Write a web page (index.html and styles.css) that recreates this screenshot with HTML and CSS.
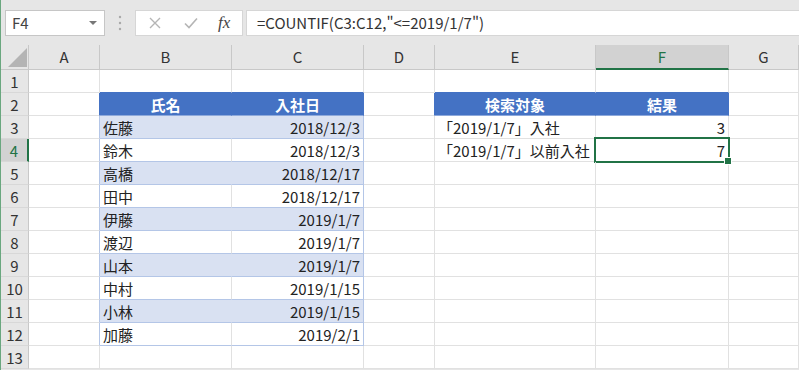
FILE: index.html
```html
<!DOCTYPE html>
<html lang="ja">
<head>
    <meta charset="UTF-8">
    <title>COUNTIF</title>
    <link rel="stylesheet" href="styles.css">
</head>
<body>
    <div class="bar">
        <div class="namebox">F4<span class="drop"></span></div>
        <svg class="grip" width="4" height="16" viewBox="0 0 4 16"><circle cx="2" cy="2" r="1.2"/><circle cx="2" cy="8" r="1.2"/><circle cx="2" cy="14" r="1.2"/></svg>
        <div class="btns">
            <svg width="14" height="14" viewBox="0 0 14 14"><path d="M2 2 L12 12 M12 2 L2 12" stroke="#b5b5b5" stroke-width="1.4" fill="none"/></svg>
            <svg width="16" height="14" viewBox="0 0 16 14"><path d="M2 7.5 L6 11.5 L14 2.5" stroke="#b5b5b5" stroke-width="1.6" fill="none"/></svg>
            <span class="fx">fx</span>
        </div>
        <div class="formula">=COUNTIF(C3:C12,"&lt;=2019/1/7")</div>
    </div>

    <div class="sheet">
        <div class="corner"><span class="tri"></span></div>
        <div class="ch">A</div><div class="ch">B</div><div class="ch">C</div><div class="ch">D</div><div class="ch">E</div><div class="ch sel">F</div><div class="ch">G</div>

        <div class="rh">1</div>
        <div class="c"></div><div class="c tt"></div><div class="c tt"></div><div class="c"></div><div class="c tt"></div><div class="c tt"></div><div class="c"></div>

        <div class="rh">2</div>
        <div class="c hl"></div><div class="c hd">氏名</div><div class="c hd">入社日</div><div class="c hl"></div><div class="c hd">検索対象</div><div class="c hd">結果</div><div class="c"></div>

        <div class="rh">3</div>
        <div class="c tl"></div><div class="c band">佐藤</div><div class="c band num tr">2018/12/3</div><div class="c"></div><div class="c">「2019/1/7」入社</div><div class="c num">3</div><div class="c"></div>

        <div class="rh sel">4</div>
        <div class="c tl"></div><div class="c row">鈴木</div><div class="c row num tr">2018/12/3</div><div class="c"></div><div class="c">「2019/1/7」以前入社</div><div class="c num active">7</div><div class="c"></div>

        <div class="rh">5</div>
        <div class="c tl"></div><div class="c band">高橋</div><div class="c band num tr">2018/12/17</div><div class="c"></div><div class="c"></div><div class="c"></div><div class="c"></div>

        <div class="rh">6</div>
        <div class="c tl"></div><div class="c row">田中</div><div class="c row num tr">2018/12/17</div><div class="c"></div><div class="c"></div><div class="c"></div><div class="c"></div>

        <div class="rh">7</div>
        <div class="c tl"></div><div class="c band">伊藤</div><div class="c band num tr">2019/1/7</div><div class="c"></div><div class="c"></div><div class="c"></div><div class="c"></div>

        <div class="rh">8</div>
        <div class="c tl"></div><div class="c row">渡辺</div><div class="c row num tr">2019/1/7</div><div class="c"></div><div class="c"></div><div class="c"></div><div class="c"></div>

        <div class="rh">9</div>
        <div class="c tl"></div><div class="c band">山本</div><div class="c band num tr">2019/1/7</div><div class="c"></div><div class="c"></div><div class="c"></div><div class="c"></div>

        <div class="rh">10</div>
        <div class="c tl"></div><div class="c row">中村</div><div class="c row num tr">2019/1/15</div><div class="c"></div><div class="c"></div><div class="c"></div><div class="c"></div>

        <div class="rh">11</div>
        <div class="c tl"></div><div class="c band">小林</div><div class="c band num tr">2019/1/15</div><div class="c"></div><div class="c"></div><div class="c"></div><div class="c"></div>

        <div class="rh">12</div>
        <div class="c tl"></div><div class="c row">加藤</div><div class="c row num tr">2019/2/1</div><div class="c"></div><div class="c"></div><div class="c"></div><div class="c"></div>

        <div class="rh">13</div>
        <div class="c"></div><div class="c"></div><div class="c"></div><div class="c"></div><div class="c"></div><div class="c"></div><div class="c"></div>
    </div>
</body>
</html>
```

FILE: styles.css
```css
*{
    margin: 0;
    padding: 0;
    box-sizing: border-box;
}
body{
    width: 799px;
    height: 370px;
    overflow: hidden;
    background-color: #e6e6e6;
    border-left: 1px solid #6aa77f;
    font-family: "Noto Sans CJK JP", "Noto Sans", sans-serif;
    color: #222;
}

/* formula bar */
.bar{
    height: 45px;
    display: flex;
    align-items: flex-start;
    padding-top: 10px;
}
.namebox{
    margin-left: 4px;
    width: 100px;
    height: 26px;
    background-color: #fff;
    border: 1px solid #c6c6c6;
    font-size: 15px;
    line-height: 24px;
    padding-left: 6px;
    color: #444;
    position: relative;
}
.drop{
    position: absolute;
    right: 7px;
    top: 10px;
    border-left: 4px solid transparent;
    border-right: 4px solid transparent;
    border-top: 4px solid #777;
}
.grip{
    fill: #a8a8a8;
    margin: 5px 0 0 13px;
}
.btns{
    margin-left: 13px;
    width: 108px;
    height: 26px;
    background-color: #fff;
    border: 1px solid #d6d6d6;
    display: flex;
    align-items: center;
    padding-left: 12px;
    gap: 21px;
}
.fx{
    font-family: "Liberation Serif", serif;
    font-style: italic;
    font-size: 17px;
    color: #444;
    margin-left: -2px;
}
.formula{
    margin-left: 3px;
    flex: 1;
    height: 26px;
    background-color: #fff;
    border: 1px solid #d6d6d6;
    border-right: none;
    font-size: 15px;
    line-height: 24px;
    padding-left: 10px;
    color: #333;
}

/* grid */
.sheet{
    display: grid;
    grid-template-columns: 28px 71px 132px 132px 71px 161px 133px 70px;
    grid-template-rows: 25px repeat(13, 23px);
    background-color: #fff;
}
.corner{
    background-color: #e6e6e6;
    border-right: 1px solid #c8c8c8;
    border-bottom: 1px solid #c8c8c8;
    display: flex;
    justify-content: flex-end;
    align-items: flex-end;
    padding: 0 1px 2px 0;
}
.tri{
    width: 0;
    height: 0;
    border-left: 19px solid transparent;
    border-bottom: 19px solid #b4b4b4;
}
.ch{
    background-color: #e6e6e6;
    border-right: 1px solid #c8c8c8;
    border-bottom: 1px solid #c8c8c8;
    text-align: center;
    font-size: 15px;
    line-height: 24px;
    color: #333;
}
.ch.sel{
    background-color: #d2d2d2;
    border-bottom: 2px solid #217346;
    color: #217346;
}
.rh{
    background-color: #e6e6e6;
    border-right: 1px solid #c8c8c8;
    border-bottom: 1px solid #d8d8d8;
    text-align: center;
    font-size: 15px;
    line-height: 23px;
    color: #333;
}
.rh.sel{
    background-color: #d2d2d2;
    border-right: 2px solid #217346;
    color: #217346;
}
.c{
    border-right: 1px solid #e1e1e1;
    border-bottom: 1px solid #e1e1e1;
    font-size: 15px;
    line-height: 23px;
    padding: 0 3px;
    white-space: nowrap;
    position: relative;
}
.num{
    text-align: right;
}

/* table formatting */
.tt{
    border-bottom-color: #4472c4;
}
.hl{
    border-right-color: #4472c4;
}
.hd{
    background-color: #4472c4;
    border-right-color: #4472c4;
    border-bottom-color: #8ea9db;
    color: #fff;
    font-weight: bold;
    text-align: center;
}
.tl{
    border-right-color: #b4c6e7;
}
.band{
    background-color: #d9e1f2;
    border-right-color: #d9e1f2;
    border-bottom-color: #b4c6e7;
}
.row{
    border-bottom-color: #b4c6e7;
}
.tr{
    border-right-color: #b4c6e7;
}

/* selected cell */
.active::after{
    content: "";
    position: absolute;
    left: -2px;
    top: -2px;
    right: -2px;
    bottom: -2px;
    border: 2px solid #217346;
}
.active::before{
    content: "";
    position: absolute;
    right: -4px;
    bottom: -4px;
    width: 6px;
    height: 6px;
    background-color: #217346;
    border: 1px solid #fff;
    z-index: 2;
}
```
